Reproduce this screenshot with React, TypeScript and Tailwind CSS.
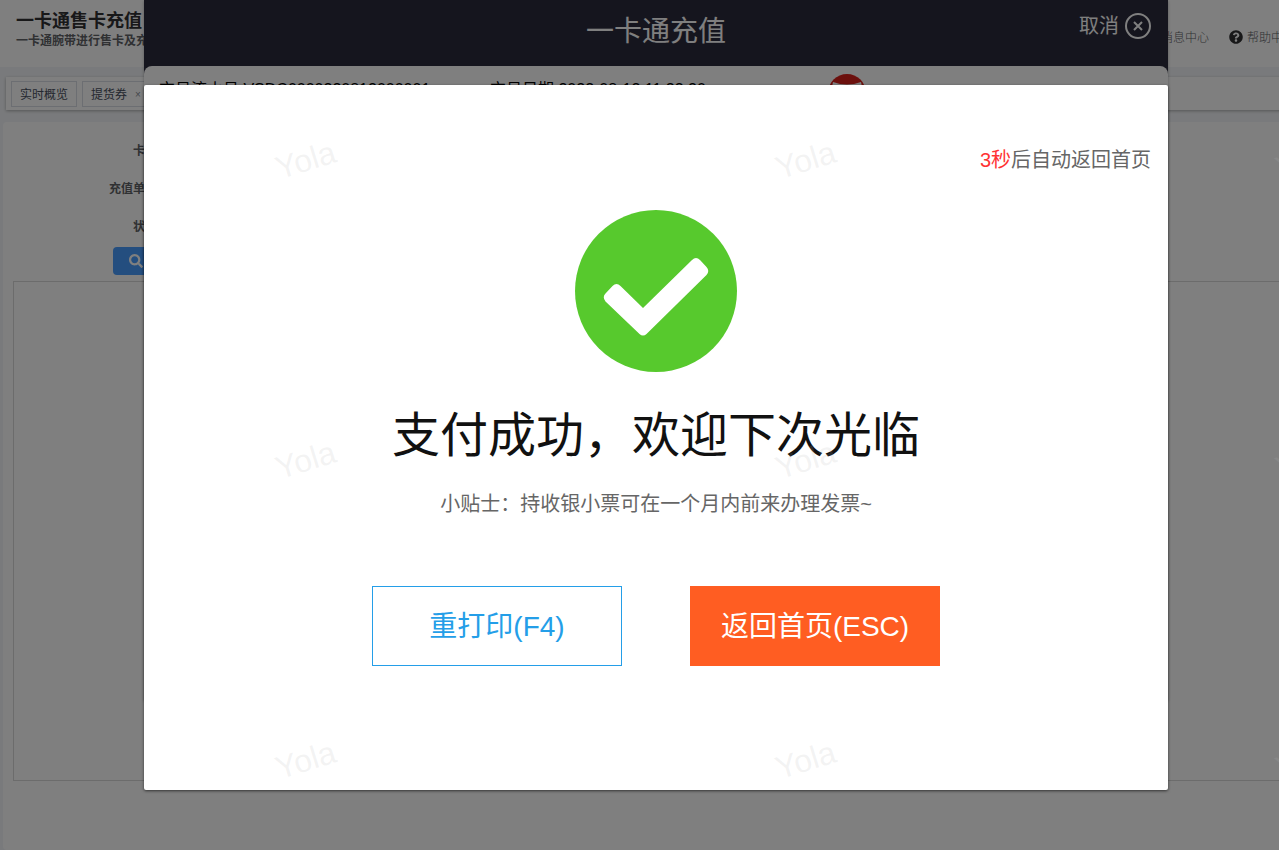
import type { ReactNode } from "react";
import { FaSearch, FaQuestionCircle } from "react-icons/fa";

function Tab({ children, closable }: { children: ReactNode; closable?: boolean }) {
  return (
    <button
      type="button"
      className="flex h-[26px] items-center gap-2 border border-[#d8dce5] bg-white px-2 pt-0.5 text-xs text-[#495060]"
    >
      <span>{children}</span>
      {closable && <span className="text-[10px] text-[#8a8f99]">×</span>}
    </button>
  );
}

function Field({ id, label }: { id: string; label: string }) {
  return (
    <div className="flex h-7 items-center gap-3">
      <label htmlFor={id} className="w-36 text-right text-xs font-bold text-[#606266]">
        {label}
      </label>
      <input id={id} className="h-7 w-48 rounded-sm border border-[#dcdfe6] px-2 text-xs" />
    </div>
  );
}

function BackgroundPage() {
  return (
    <div className="-mr-4 flex min-h-screen flex-col bg-[#f3f5f8]">
      <header className="flex h-[67px] items-start justify-between bg-white pl-4">
        <div className="pt-[9px]">
          <h1 className="text-lg leading-6 font-bold text-[#303133]">一卡通售卡充值</h1>
          <p className="text-xs leading-4 font-bold text-[#606266]">一卡通腕带进行售卡及充值管理</p>
        </div>
        <nav className="flex items-center gap-5 pt-7 text-xs leading-4 font-light text-[#606266]">
          <a href="#messages" className="pt-0.5">消息中心</a>
          <a href="#help" className="flex items-center gap-1">
            <FaQuestionCircle className="size-3.5 text-[#303133]" />
            <span className="pt-0.5">帮助中心</span>
          </a>
        </nav>
      </header>
      <div className="mt-2.5 ml-1.5 flex h-[33px] items-center gap-[5px] bg-white px-[5px] shadow-[0_1px_3px_rgba(0,0,0,0.3)]">
        <Tab>实时概览</Tab>
        <Tab closable>提货券</Tab>
      </div>
      <main className="mt-3 ml-[3px] flex-1 rounded-sm bg-white pt-[15px] pl-2.5">
        <div className="flex flex-col gap-2.5">
          <Field id="card" label="卡号" />
          <Field id="order" label="充值单号" />
          <Field id="status" label="状态" />
        </div>
        <button
          type="button"
          className="mt-1.5 ml-[100px] flex h-7 items-center gap-2 rounded-sm bg-[#489dff] px-4 text-xs text-white"
        >
          <FaSearch className="size-3.5" />
          查询
        </button>
        <div className="mt-1.5 h-[500px] border border-[#d8d8d8]" />
      </main>
    </div>
  );
}

function RechargeDialog() {
  return (
    <section className="h-[700px] flex-1 overflow-hidden bg-[#2a2a3c] shadow-[0_1px_3px_rgba(0,0,0,0.3)]">
      <div className="relative h-[66px] text-white">
        <h2 className="pt-3.5 text-center text-[28px] leading-9">一卡通充值</h2>
        <button
          type="button"
          className="absolute top-3 right-[17px] flex items-center gap-1.5 text-xl leading-7"
        >
          取消
          <svg viewBox="0 0 26 26" className="size-[26px]" fill="none" stroke="currentColor" strokeWidth="2">
            <circle cx="13" cy="13" r="12" />
            <path d="M9 9l8 8M17 9l-8 8" />
          </svg>
        </button>
      </div>
      <div className="flex h-full items-start rounded-t-lg bg-white pt-2 pl-[15px] text-base leading-8 text-black">
        <span className="w-[331px]">交易流水号:VSDC0000220812000001</span>
        <span className="w-[338px]">交易日期:2022-08-12 11:23:20</span>
        <svg viewBox="0 0 38 38" className="size-[38px]">
          <circle cx="19" cy="19" r="19" fill="#d9211b" />
          <path d="M5 8q14 5 28 0l1 5q-15 6-30 0z" fill="#fff" />
        </svg>
      </div>
    </section>
  );
}

function SuccessDialog() {
  return (
    <section
      role="dialog"
      aria-labelledby="pay-title"
      className="flex h-[705px] flex-1 flex-col items-center rounded-xs bg-white shadow-[0_1px_3px_rgba(0,0,0,0.6)]"
    >
      <p className="mt-[61px] self-end pr-[17px] text-xl leading-7 text-[#666]">
        <span className="text-[#ff3333]">3秒</span>后自动返回首页
      </p>
      <svg viewBox="0 0 162 162" className="mt-9 size-[162px]">
        <circle cx="81" cy="81" r="81" fill="#57c92d" />
        <path
          d="M30.500 83.500Q27 87 30.500 91.500L64.500 124Q68 127 71.500 124L131.500 65Q135 61 131.500 57L125 50Q121 46 117 50L68 98L45.500 76Q41.500 72 37.500 76Z"
          fill="#fff"
        />
      </svg>
      <h2 id="pay-title" className="mt-[34px] text-5xl leading-[60px] text-[#111]">
        支付成功，欢迎下次光临
      </h2>
      <p className="mt-[22px] text-xl leading-8 text-[#666]">小贴士：持收银小票可在一个月内前来办理发票~</p>
      <div className="mt-[66px] flex gap-[68px] text-[28px]">
        <button type="button" className="h-20 w-[250px] border border-[#249ee8] bg-white pt-0.5 text-[#249ee8]">
          重打印(F4)
        </button>
        <button type="button" className="h-20 w-[250px] bg-[#ff5d22] pt-0.5 text-white">
          返回首页(ESC)
        </button>
      </div>
    </section>
  );
}

function Watermark() {
  return (
    <div
      aria-hidden="true"
      className="pointer-events-none absolute inset-0 grid auto-rows-[300px] grid-cols-[500px_500px_500px] overflow-hidden pt-2.5 pl-14"
    >
      {Array.from({ length: 9 }, (_, i) => (
        <span
          key={i}
          className="flex items-center justify-center text-[32px] text-[rgba(180,180,180,0.16)]"
        >
          <span className="-rotate-17">Yola</span>
        </span>
      ))}
    </div>
  );
}

export default function App() {
  return (
    <div className="relative h-screen overflow-hidden font-['Liberation_Sans','Noto_Sans_CJK_SC',sans-serif]">
      <BackgroundPage />
      <div className="absolute inset-0 flex items-start pr-[111px] pl-36">
        <RechargeDialog />
      </div>
      <div className="absolute inset-0 flex items-start bg-black/50 pt-[85px] pr-[111px] pl-36">
        <SuccessDialog />
      </div>
      <Watermark />
    </div>
  );
}
